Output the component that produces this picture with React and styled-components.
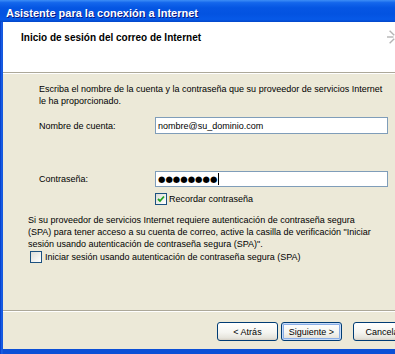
import styled, { createGlobalStyle } from 'styled-components';

const GlobalStyle = createGlobalStyle`
  html, body {
    margin: 0;
    padding: 0;
    background: #0a4fd8;
  }
  body {
    font-family: 'Liberation Sans', Arial, sans-serif;
    font-size: 9px;
    color: #000;
  }
`;

const Window = styled.div`
  width: 395px;
  height: 354px;
  display: flex;
  flex-direction: column;
  overflow: hidden;
  background: linear-gradient(90deg, #0831b8 0px, #0a55e3 1px, #1f62e6 2px, #0b4fd6 3px);
`;

const TitleBar = styled.div`
  height: 22px;
  box-sizing: border-box;
  padding: 3px 0 0 6px;
  line-height: 20px;
  font-size: 11px;
  font-weight: bold;
  color: #fff;
  text-shadow: 1px 1px #0a1883;
  white-space: nowrap;
  background: linear-gradient(
    180deg,
    #3d8ef6 0%,
    #1467ec 12%,
    #0556e3 35%,
    #0353e1 65%,
    #0659e8 88%,
    #0347c8 100%
  );
`;

const Client = styled.div`
  flex: 1;
  margin: 0 0 5px 3px;
  display: flex;
  flex-direction: column;
  background: #ece9d8;
  overflow: hidden;
`;

const Header = styled.div`
  height: 51px;
  box-sizing: border-box;
  display: flex;
  align-items: flex-start;
  padding: 10px 0 0 18px;
  background: #fff;
  border-bottom: 1px solid #aca899;
  overflow: hidden;
`;

const HeaderTitle = styled.div`
  font-size: 10px;
  line-height: 12px;
  font-weight: bold;
  white-space: nowrap;
`;

const HeaderIcon = styled.svg`
  flex: none;
  margin: -5px -11px 0 auto;
`;

const Etch = styled.div`
  height: 1px;
  background: #fff;
`;

const Body = styled.div`
  flex: 1;
  padding: 9px 7px 0 25px;
  line-height: 12px;
`;

const Indented = styled.div`
  padding-left: 11px;
`;

const Text = styled.div`
  white-space: nowrap;
  margin-top: ${(p) => p.$top || 0}px;
`;

const FieldRow = styled.div`
  display: flex;
  align-items: center;
  margin-top: ${(p) => p.$top}px;
`;

const Label = styled.div`
  width: 116px;
  flex: none;
  white-space: nowrap;
`;

const TextBox = styled.div`
  flex: 1;
  height: ${(p) => p.$height}px;
  box-sizing: border-box;
  border: 1px solid #7f9db9;
  background: #fff;
  padding: 0 2px;
  display: flex;
  align-items: center;
  white-space: nowrap;
`;

const Dots = styled.span`
  font-family: 'DejaVu Sans', sans-serif;
  font-size: 8.5px;
  letter-spacing: 0;
  line-height: 1;
`;

const Caret = styled.span`
  display: inline-block;
  width: 1px;
  height: 12px;
  background: #000;
  margin-left: 1px;
`;

const CheckRow = styled.div`
  display: flex;
  align-items: center;
  gap: ${(p) => p.$gap}px;
  margin: ${(p) => p.$top}px 0 0 ${(p) => p.$left}px;
  white-space: nowrap;
`;

const Box = styled.span`
  width: 12px;
  height: 12px;
  box-sizing: border-box;
  flex: none;
  border: 1px solid #1c5180;
  background: linear-gradient(135deg, #dcdcd7 0%, #f2f2ef 60%, #fff 100%);
  display: flex;
  align-items: center;
  justify-content: center;
`;

const Footer = styled.div`
  height: 39px;
  box-sizing: border-box;
  border-top: 1px solid #aca899;
  box-shadow: inset 0 1px 0 #fff;
  padding: 11px 0 0 214px;
  display: flex;
  align-items: flex-start;
  gap: 3px;
`;

const Button = styled.button`
  flex: none;
  width: 61px;
  height: 19px;
  padding: 0;
  margin-left: ${(p) => (p.$spaced ? 8 : 0)}px;
  font-family: 'Liberation Sans', Arial, sans-serif;
  font-size: 9px;
  color: #000;
  border: 1px solid #003c74;
  border-radius: 3px;
  background: linear-gradient(180deg, #fff 0%, #f5f5f1 55%, #e6e4dc 88%, #d6d0c5 100%);
  box-shadow: ${(p) =>
    p.$default ? 'inset 0 0 0 1px #c6dbf8, inset 0 0 0 2px #8aaee6' : 'none'};
`;

const Checkbox = ({ checked }) => (
  <Box>
    {checked && (
      <svg width="8" height="8" viewBox="0 0 8 8">
        <path d="M1 4 L3 6 L7 1.5" fill="none" stroke="#21a121" strokeWidth="1.8" />
      </svg>
    )}
  </Box>
);

const Burst = () => {
  const rays = [0, 45, 90, 135, 180, 225, 270, 315];
  return (
    <HeaderIcon width="20" height="20" viewBox="0 0 20 20">
      {rays.map((a) => {
        const r = (a * Math.PI) / 180;
        return (
          <line
            key={a}
            x1={10 + Math.cos(r) * 2.5}
            y1={10 + Math.sin(r) * 2.5}
            x2={10 + Math.cos(r) * 9}
            y2={10 + Math.sin(r) * 9}
            stroke="#b4b4b4"
            strokeWidth="1.4"
          />
        );
      })}
    </HeaderIcon>
  );
};

export default function App() {
  return (
    <>
      <GlobalStyle />
      <Window>
        <TitleBar>Asistente para la conexión a Internet</TitleBar>
        <Client>
          <Header>
            <HeaderTitle>Inicio de sesión del correo de Internet</HeaderTitle>
            <Burst />
          </Header>
          <Etch />
          <Body>
            <Indented>
              <Text>
                Escriba el nombre de la cuenta y la contraseña que su proveedor de servicios Internet
                <br />
                le ha proporcionado.
              </Text>
              <FieldRow $top={10}>
                <Label>Nombre de cuenta:</Label>
                <TextBox $height={17}>nombre@su_dominio.com</TextBox>
              </FieldRow>
              <FieldRow $top={37}>
                <Label>Contraseña:</Label>
                <TextBox $height={16}>
                  <Dots>●●●●●●●●</Dots>
                  <Caret />
                </TextBox>
              </FieldRow>
              <CheckRow $top={6} $left={116} $gap={2}>
                <Checkbox checked />
                Recordar contraseña
              </CheckRow>
            </Indented>
            <Text $top={9}>
              Si su proveedor de servicios Internet requiere autenticación de contraseña segura
              <br />
              (SPA) para tener acceso a su cuenta de correo, active la casilla de verificación "Iniciar
              <br />
              sesión usando autenticación de contraseña segura (SPA)".
            </Text>
            <CheckRow $top={1} $left={2} $gap={3}>
              <Checkbox />
              Iniciar sesión usando autenticación de contraseña segura (SPA)
            </CheckRow>
          </Body>
          <Footer>
            <Button>&lt; Atrás</Button>
            <Button $default>Siguiente &gt;</Button>
            <Button $spaced>Cancelar</Button>
          </Footer>
        </Client>
      </Window>
    </>
  );
}
